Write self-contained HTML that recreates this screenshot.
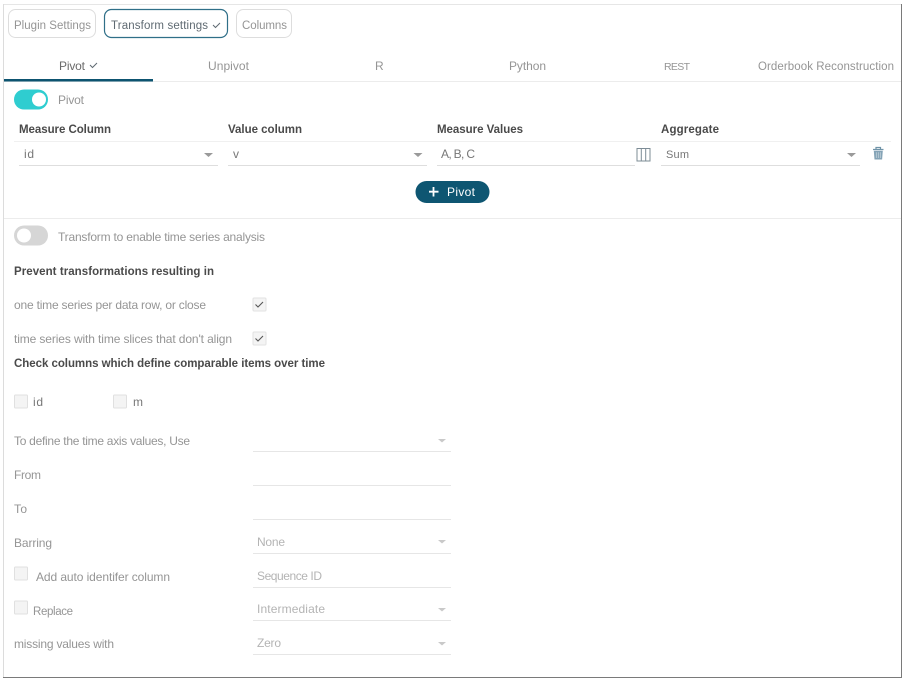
<!DOCTYPE html>
<html><head><meta charset="utf-8">
<style>
html,body{margin:0;padding:0;background:#fff;width:906px;height:682px;overflow:hidden}
svg{display:block}
text{font-family:"Liberation Sans",sans-serif;font-size:12px;fill:#7d7d7d}
.b{font-weight:bold;font-size:11.5px;fill:#4a4a4a}
.d{fill:#5f6a72}
.m{fill:#959595}
.l{fill:#b4b4b4}
</style></head><body>
<svg width="906" height="682" viewBox="0 0 906 682" xmlns="http://www.w3.org/2000/svg">
<rect width="906" height="682" fill="#fff"/>
<!-- frame -->
<rect x="3" y="4" width="898" height="1" fill="#e6e6e6"/>
<rect x="3" y="4" width="1" height="674" fill="#dcdcdc"/>
<rect x="901" y="4" width="1" height="674" fill="#7a7a7a"/>
<rect x="3" y="677" width="899" height="1" fill="#7a7a7a"/>
<!-- top buttons -->
<rect x="8.500" y="9.500" width="87" height="28" rx="7" fill="#fff" stroke="#dddddd"/>
<text x="14" y="29" textLength="77" lengthAdjust="spacing" class="m" style="font-size:11.5px">Plugin Settings</text>
<rect x="104.500" y="9.500" width="123" height="28" rx="7" fill="#fff" stroke="#2f6f88" stroke-width="1.200"/>
<text x="111" y="29" textLength="97" lengthAdjust="spacing" class="d" style="font-size:11.5px">Transform settings</text>
<path d="M213 25l2.500 2.500 4.500-4.500" fill="none" stroke="#5f6a72" stroke-width="1"/>
<rect x="236.500" y="9.500" width="55" height="28" rx="7" fill="#fff" stroke="#dddddd"/>
<text x="242" y="29" textLength="45" lengthAdjust="spacing" class="m" style="font-size:11.5px">Columns</text>
<!-- tabs -->
<text x="59" y="70" textLength="26" lengthAdjust="spacing" style="fill:#6a6a6a">Pivot</text>
<path d="M90 65l2.500 2.500 4.500-4.500" fill="none" stroke="#5f6a72" stroke-width="1"/>
<text x="208" y="70" textLength="41" lengthAdjust="spacing" class="m">Unpivot</text>
<text x="375" y="70" textLength="7" lengthAdjust="spacing" class="m">R</text>
<text x="509" y="70" textLength="37" lengthAdjust="spacing" class="m">Python</text>
<text x="664" y="70" textLength="26" lengthAdjust="spacing" class="m" style="font-size:10.5px">REST</text>
<text x="758" y="70" textLength="136" lengthAdjust="spacing" class="m" style="font-size:11.500px">Orderbook Reconstruction</text>
<rect x="4" y="81" width="897" height="1" fill="#ececec"/>
<rect x="4" y="79" width="149" height="2.500" fill="#0d5470"/>
<!-- pivot toggle -->
<rect x="14" y="89.500" width="34" height="20" rx="10" fill="#2fcdd0"/>
<circle cx="39" cy="99.500" r="7" fill="#fff"/>
<text x="58" y="104" textLength="26" lengthAdjust="spacing" class="m">Pivot</text>
<!-- row headers -->
<text x="19" y="133" textLength="92" lengthAdjust="spacing" class="b">Measure Column</text>
<text x="228" y="133" textLength="74" lengthAdjust="spacing" class="b">Value column</text>
<text x="437" y="133" textLength="86" lengthAdjust="spacing" class="b">Measure Values</text>
<text x="661" y="133" textLength="58" lengthAdjust="spacing" class="b">Aggregate</text>
<rect x="14" y="141" width="877" height="1" fill="#f0f0f0"/>
<!-- row -->
<text x="24" y="158" textLength="10" lengthAdjust="spacing" style="fill:#777">id</text>
<path d="M204 153h9l-4.500 4z" fill="#9a9a9a"/>
<rect x="19" y="165" width="199" height="1" fill="#dedede"/>
<text x="233" y="158" textLength="6" lengthAdjust="spacing" style="fill:#777">v</text>
<path d="M413.500 153h9l-4.500 4z" fill="#9a9a9a"/>
<rect x="228" y="165" width="199" height="1" fill="#dedede"/>
<text x="441" y="158" textLength="34" lengthAdjust="spacing" style="fill:#777">A, B, C</text>
<rect x="437" y="165" width="198" height="1" fill="#dedede"/>
<path d="M637 148.500h13v12.500h-13zM641.300 148.500v12.500M645.700 148.500v12.500" fill="none" stroke="#7d8c96" stroke-width="1"/>
<text x="666" y="158" textLength="23" lengthAdjust="spacing" style="fill:#777;font-size:11px">Sum</text>
<path d="M847 153h9l-4.500 4z" fill="#9a9a9a"/>
<rect x="661" y="165" width="199" height="1" fill="#dedede"/>
<!-- trash -->
<path d="M873 149.500h10.500M876 149v-1.500h4.500v1.500" fill="none" stroke="#6f93a8" stroke-width="1.200"/>
<path d="M873.800 150.800h9l-.7 8.700h-7.600z" fill="#84a3b6"/>
<path d="M876.300 152.300v5.700M878.300 152.300v5.700M880.300 152.300v5.700" stroke="#c9d7df" stroke-width=".7"/>
<!-- pivot button -->
<rect x="415.500" y="181" width="74" height="22" rx="11" fill="#0e5672"/>
<path d="M433.500 187v9.500M429 191.700h9.500" stroke="#fff" stroke-width="1.800"/>
<text x="447" y="196" textLength="28" lengthAdjust="spacing" style="fill:#fff">Pivot</text>
<rect x="4" y="218" width="897" height="1" fill="#ececec"/>
<!-- transform toggle -->
<rect x="14" y="225.500" width="34" height="20" rx="10" fill="#d6d6d6"/>
<circle cx="24" cy="235.500" r="7" fill="#fff"/>
<text x="58" y="241" textLength="207" lengthAdjust="spacing" class="m">Transform to enable time series analysis</text>
<text x="14" y="275" textLength="200" lengthAdjust="spacing" class="b">Prevent transformations resulting in</text>
<text x="14" y="309" textLength="192" lengthAdjust="spacing" class="m">one time series per data row, or close</text>
<rect x="253" y="298" width="13" height="13" rx="1" fill="#f4f4f4" stroke="#e2e2e2"/>
<path d="M255.500 304.500l2.500 2.500 5-5" fill="none" stroke="#555" stroke-width="1.100"/>
<text x="14" y="343" textLength="218" lengthAdjust="spacing" class="m">time series with time slices that don't align</text>
<rect x="253" y="332" width="13" height="13" rx="1" fill="#f4f4f4" stroke="#e2e2e2"/>
<path d="M255.500 338.500l2.500 2.500 5-5" fill="none" stroke="#555" stroke-width="1.100"/>
<text x="14" y="367" textLength="311" lengthAdjust="spacing" class="b">Check columns which define comparable items over time</text>
<rect x="14.500" y="395" width="13" height="13" rx="1" fill="#f4f4f4" stroke="#e0e0e0"/>
<text x="33" y="406" textLength="10" lengthAdjust="spacing" style="fill:#777">id</text>
<rect x="113.500" y="395" width="13" height="13" rx="1" fill="#f4f4f4" stroke="#e0e0e0"/>
<text x="133" y="406" textLength="10" lengthAdjust="spacing" style="fill:#777">m</text>
<!-- form -->
<text x="14" y="445" textLength="176" lengthAdjust="spacing" class="m">To define the time axis values, Use</text>
<path d="M438 439h8l-4 3.500z" fill="#c9c9c9"/>
<rect x="253" y="451" width="198" height="1" fill="#e6e6e6"/>
<text x="14" y="479" textLength="27" lengthAdjust="spacing" class="m">From</text>
<rect x="253" y="485" width="198" height="1" fill="#e6e6e6"/>
<text x="14" y="513" textLength="13" lengthAdjust="spacing" class="m">To</text>
<rect x="253" y="519" width="198" height="1" fill="#e6e6e6"/>
<text x="14" y="547" textLength="38" lengthAdjust="spacing" class="m">Barring</text>
<text x="257" y="546" textLength="28" lengthAdjust="spacing" class="l">None</text>
<path d="M438 540h8l-4 3.500z" fill="#c9c9c9"/>
<rect x="253" y="553" width="198" height="1" fill="#e6e6e6"/>
<rect x="14.500" y="567" width="13" height="13" rx="1" fill="#f4f4f4" stroke="#e0e0e0"/>
<text x="36" y="581" textLength="134" lengthAdjust="spacing" class="m">Add auto identifer column</text>
<text x="257" y="580" textLength="65" lengthAdjust="spacing" class="l">Sequence ID</text>
<rect x="253" y="587" width="198" height="1" fill="#e6e6e6"/>
<rect x="14.500" y="601" width="13" height="13" rx="1" fill="#f4f4f4" stroke="#e0e0e0"/>
<text x="33" y="615" textLength="40" lengthAdjust="spacing" class="m" style="font-size:11.5px">Replace</text>
<text x="257" y="613" textLength="68" lengthAdjust="spacing" class="l">Intermediate</text>
<path d="M438 608h8l-4 3.500z" fill="#c9c9c9"/>
<rect x="253" y="620" width="198" height="1" fill="#e6e6e6"/>
<text x="14" y="648" textLength="100" lengthAdjust="spacing" class="m">missing values with</text>
<text x="257" y="647" textLength="24" lengthAdjust="spacing" class="l">Zero</text>
<path d="M438 642h8l-4 3.500z" fill="#c9c9c9"/>
<rect x="253" y="654" width="198" height="1" fill="#e6e6e6"/>
</svg>
</body></html>
